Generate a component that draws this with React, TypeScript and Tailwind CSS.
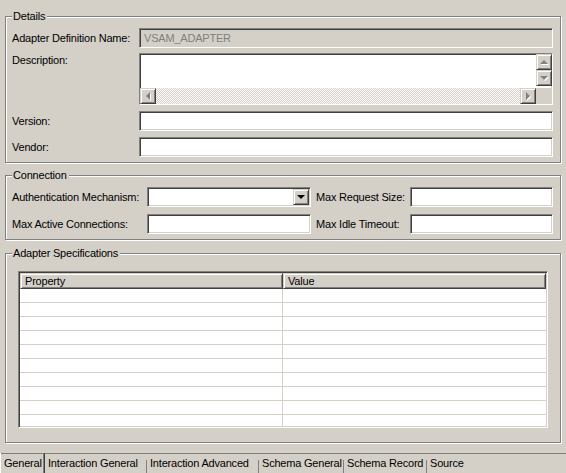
import React from "react";

// classic win2k bevels
const sunken =
  "border border-t-[#808080] border-l-[#808080] border-b-white border-r-white shadow-[inset_1px_1px_0_#404040,inset_-1px_-1px_0_#d4d0c8]";
const raised =
  "border border-t-[#d4d0c8] border-l-[#d4d0c8] border-b-[#404040] border-r-[#404040] shadow-[inset_1px_1px_0_#fff,inset_-1px_-1px_0_#808080]";

function Group({ title, className, children }: { title: string; className: string; children?: React.ReactNode }) {
  return (
    <div className={`relative border border-[#808080] shadow-[inset_1px_1px_0_#fff,1px_1px_0_#fff] ${className}`}>
      <span className="absolute left-[6px] -top-[7px] bg-[#d4d0c8] pl-[1px] pr-[2px] leading-[13px]">{title}</span>
      {children}
    </div>
  );
}

function Arrow({ dir, color = "#808080" }: { dir: "up" | "down" | "left" | "right"; color?: string }) {
  const pts: Record<string, string> = {
    up: "4,1 8,5 0,5",
    down: "0,1 8,1 4,5",
    left: "5,0 5,8 1,4",
    right: "1,0 1,8 5,4",
  };
  const vertical = dir === "up" || dir === "down";
  const disabled = color === "#808080";
  return (
    <svg width={vertical ? 9 : 7} height={vertical ? 7 : 9} viewBox={vertical ? "0 0 9 7" : "0 0 7 9"}>
      {disabled && <polygon points={pts[dir]} fill="#fff" transform="translate(1,1)" />}
      <polygon points={pts[dir]} fill={color} />
    </svg>
  );
}

function ScrollBtn({ dir }: { dir: "up" | "down" | "left" | "right" }) {
  return (
    <div className={`w-[16px] h-[16px] flex items-center justify-center bg-[#d4d0c8] ${raised}`}>
      <Arrow dir={dir} />
    </div>
  );
}

function TextBox({ value, disabled, className = "" }: { value?: string; disabled?: boolean; className?: string }) {
  return (
    <div
      className={`h-[20px] flex items-center pl-[4px] ${sunken} ${disabled ? "bg-[#d4d0c8] text-[#808080]" : "bg-white"} ${className}`}
    >
      {value}
    </div>
  );
}

const tabs = [
  { label: "General", w: "w-[45px]" },
  { label: "Interaction General", w: "w-[102px]" },
  { label: "Interaction Advanced", w: "w-[112px]" },
  { label: "Schema General", w: "w-[85px]" },
  { label: "Schema Record", w: "w-[83px]" },
  { label: "Source", w: "w-[50px]" },
];

export default function App() {
  return (
    <div className="w-[566px] h-[473px] bg-[#d4d0c8] flex flex-col text-[11px] leading-[13px] tracking-[-0.2px] text-black overflow-hidden whitespace-nowrap font-['Liberation_Sans',Arial,sans-serif]">
      <div className="flex-1 px-[5px] flex flex-col">
        {/* Details */}
        <Group title="Details" className="mt-[16px] h-[147px] pt-[11px] pl-[6px] pr-[7px]">
          <div className="flex items-center">
            <span className="w-[127px]">Adapter Definition Name:</span>
            <TextBox value="VSAM_ADAPTER" disabled className="flex-1" />
          </div>
          <div className="flex items-start mt-[5px]">
            <span className="w-[127px] pt-[1px]">Description:</span>
            <div className={`flex-1 h-[52px] bg-white ${sunken} grid grid-cols-[1fr_16px] grid-rows-[1fr_16px]`}>
              <div />
              <div className="flex flex-col">
                <ScrollBtn dir="up" />
                <ScrollBtn dir="down" />
              </div>
              <div className="flex">
                <ScrollBtn dir="left" />
                <div className="flex-1 bg-[repeating-conic-gradient(#d4d0c8_0_25%,#fff_0_50%)] bg-[length:2px_2px]" />
                <ScrollBtn dir="right" />
              </div>
              <div className="bg-[#d4d0c8]" />
            </div>
          </div>
          <div className="flex items-center mt-[6px]">
            <span className="w-[127px]">Version:</span>
            <TextBox className="flex-1" />
          </div>
          <div className="flex items-center mt-[6px]">
            <span className="w-[127px]">Vendor:</span>
            <TextBox className="flex-1" />
          </div>
        </Group>

        {/* Connection */}
        <Group
          title="Connection"
          className="mt-[12px] h-[65px] pt-[11px] pl-[6px] pr-[7px] grid grid-cols-[135px_164px_99px_143px] grid-rows-[20px_20px] gap-y-[7px] items-center"
        >
          <span>Authentication Mechanism:</span>
          <div className={`h-[20px] bg-white flex justify-end items-center pr-[1px] ${sunken}`}>
            <div className={`w-[16px] h-[16px] flex items-center justify-center bg-[#d4d0c8] ${raised}`}>
              <Arrow dir="down" color="#000" />
            </div>
          </div>
          <span className="pl-[5px]">Max Request Size:</span>
          <TextBox />
          <span>Max Active Connections:</span>
          <TextBox />
          <span className="pl-[5px]">Max Idle Timeout:</span>
          <TextBox />
        </Group>

        {/* Adapter Specifications */}
        <Group title="Adapter Specifications" className="mt-[13px] h-[190px] pt-[17px] pb-[14px] px-[12px] flex flex-col">
          <div className={`h-[157px] bg-white flex flex-col overflow-hidden ${sunken} p-[1px]`}>
            <div className="flex h-[16px] shrink-0">
              <div className={`w-[263px] bg-[#d4d0c8] pl-[4px] flex items-center ${raised}`}>Property</div>
              <div className={`flex-1 bg-[#d4d0c8] pl-[4px] flex items-center ${raised}`}>Value</div>
            </div>
            {Array.from({ length: 10 }).map((_, i) => (
              <div key={i} className="flex h-[14px] shrink-0 border-b border-[#d4d0c8]">
                <div className="w-[263px] border-r border-[#d4d0c8]" />
                <div className="flex-1" />
              </div>
            ))}
          </div>
        </Group>
      </div>

      {/* Bottom tabs */}
      <div className="h-[20px] border-t border-[#808080] flex">
        {tabs.map((t, i) => (
          <div
            key={t.label}
            className={`${t.w} shrink-0 flex items-center relative ${
              i === 0
                ? "-mt-[1px] pl-[3px] border-l border-white border-r border-r-[#404040] shadow-[inset_-1px_0_0_#808080]"
                : "pl-[3px]"
            }`}
          >
            {t.label}
            {i > 0 && i < tabs.length - 1 && <span className="absolute right-0 bottom-0 h-[13px] w-px bg-[#808080]" />}
          </div>
        ))}
      </div>
    </div>
  );
}
